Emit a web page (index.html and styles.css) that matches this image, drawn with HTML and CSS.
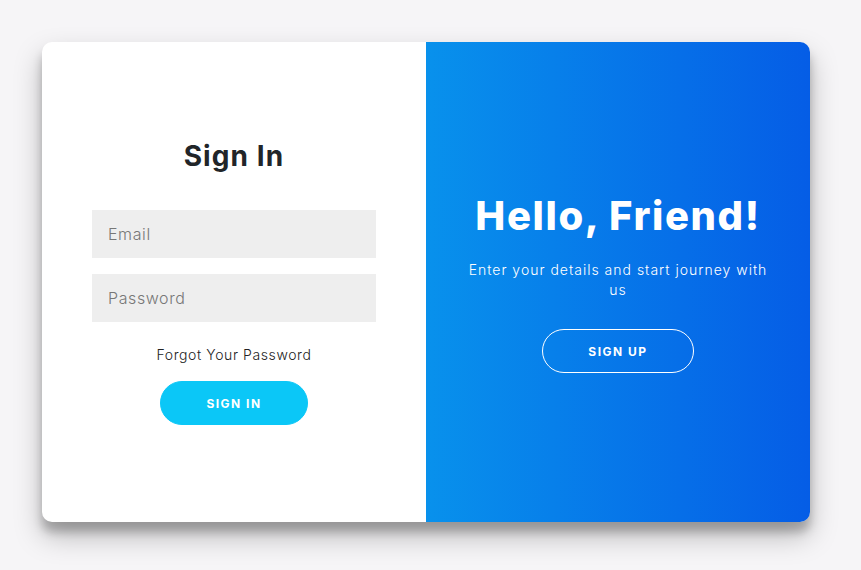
FILE: index.html
```html
<!DOCTYPE html>
<html lang="en">
<head>
<meta charset="utf-8">
<title>Sign In</title>
<link rel="stylesheet" href="styles.css">
</head>
<body>
<div class="container">
  <form class="form-panel">
    <h1 class="title">Sign In</h1>
    <input class="field" type="email" placeholder="Email">
    <input class="field" type="password" placeholder="Password">
    <a class="forgot" href="#">Forgot Your Password</a>
    <button class="btn btn-primary" type="button">Sign In</button>
  </form>
  <div class="overlay-panel">
    <h1 class="overlay-title">Hello, Friend!</h1>
    <p class="overlay-text">Enter your details and start journey with us</p>
    <button class="btn btn-ghost" type="button">Sign Up</button>
  </div>
</div>
</body>
</html>
```
FILE: styles.css
```css
* { box-sizing: border-box; }
html, body { height: 100%; }
body {
  margin: 0;
  padding: 42px 0 0 42px;
  background: #f6f5f7;
  font-family: "Inter", "Open Sans", sans-serif;
  display: flex;
  align-items: flex-start;
  justify-content: flex-start;
}
.container {
  width: 768px;
  height: 480px;
  background: #fff;
  border-radius: 10px;
  overflow: hidden;
  display: flex;
  box-shadow: 0 14px 28px rgba(0,0,0,0.25), 0 10px 10px rgba(0,0,0,0.22);
}
.form-panel {
  width: 384px;
  padding: 0 50px;
  display: flex;
  flex-direction: column;
  align-items: center;
  justify-content: center;
  margin: 0;
}
.title {
  margin: 0 0 37px;
  font-size: 28px;
  font-weight: 700;
  color: #212529;
  letter-spacing: 1.1px;
}
.field {
  width: 100%;
  height: 48px;
  border: none;
  background: #eee;
  padding: 12px 16px;
  margin: 0 0 16px;
  font-family: inherit;
  font-size: 16px;
  font-weight: 300;
  letter-spacing: 0.6px;
  color: #333;
  outline: none;
}
.field::placeholder { color: #777; }
.field:last-of-type { margin-bottom: 0; }
.forgot {
  margin: 24px 0 18px;
  font-size: 14px;
  font-weight: 300;
  letter-spacing: 0.6px;
  color: #222;
  text-decoration: none;
}
.btn {
  border-radius: 22px;
  font-family: inherit;
  font-size: 12px;
  font-weight: 700;
  letter-spacing: 1.5px;
  text-transform: uppercase;
  height: 44px;
  color: #fff;
  cursor: pointer;
}
.btn-primary {
  width: 148px;
  background: #0bc7f7;
  border: 1px solid #0bc7f7;
}
.btn-ghost {
  width: 152px;
  background: transparent;
  border: 1px solid #fff;
}
.overlay-panel {
  width: 384px;
  padding: 0 40px;
  display: flex;
  flex-direction: column;
  align-items: center;
  justify-content: center;
  text-align: center;
  color: #fff;
  background: linear-gradient(to right, #0891ec, #055de6);
}
.overlay-title {
  margin: 0;
  font-size: 40px;
  font-weight: 800;
  letter-spacing: 1.6px;
}
.overlay-text {
  margin: 20px 0 29px;
  font-size: 14px;
  font-weight: 300;
  line-height: 20px;
  letter-spacing: 1px;
}
```
